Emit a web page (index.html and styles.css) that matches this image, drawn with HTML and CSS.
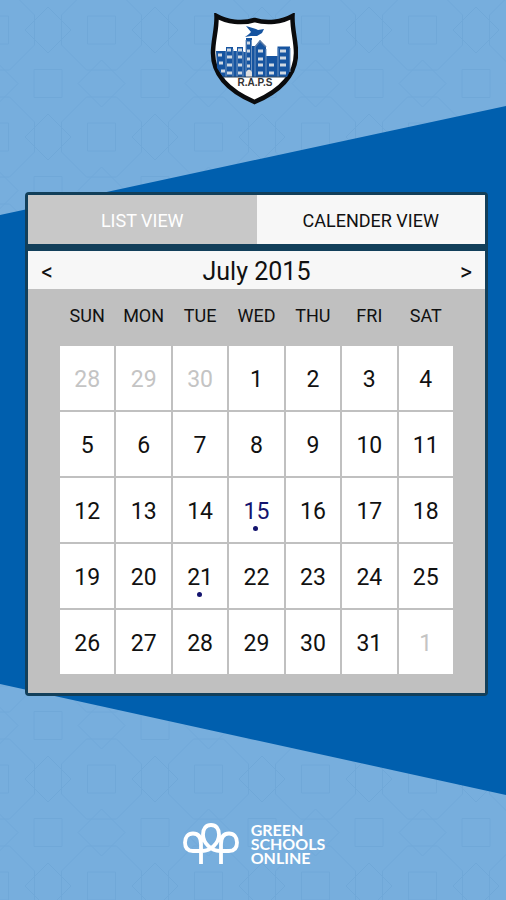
FILE: index.html
```html
<!DOCTYPE html>
<html lang="en">
<head>
<meta charset="utf-8">
<meta name="viewport" content="width=device-width, initial-scale=1">
<title>School calendar</title>
<link rel="stylesheet" href="styles.css">
</head>
<body>
<div class="app">
  <svg class="backdrop" viewBox="0 0 506 900" preserveAspectRatio="none" aria-hidden="true">
    <defs>
      <pattern id="tiles" width="107" height="107" patternUnits="userSpaceOnUse" x="48" y="30">
        <g fill="none" stroke="#5f9bcd" stroke-width="1">
          <!-- squares -->
          <path d="M39.500-14v28h28v-28M39.500 121v-28h28v28M-14 39.500h28v28h-28M121 39.500h-28v28h28"/>
          <!-- diamonds -->
          <path d="M0-23L23 0L0 23M107-23L84 0L107 23M0 84L23 107M107 84L84 107M53.500 30L77 53.500L53.500 77L30 53.500z"/>
          <!-- octagons -->
          <path d="M13.500 0V15L38.500 40H68.500L93.500 15V0M13.500 107V92L38.500 67H68.500L93.500 92V107"/>
        </g>
      </pattern>
    </defs>
    <rect width="506" height="900" fill="#77aedd"/>
    <rect width="506" height="900" fill="url(#tiles)" opacity=".3"/>
    <path d="M0 215L506 106V795L0 684z" fill="#005fae"/>
  </svg>

  <header class="crest">
    <svg viewBox="0 0 88 92" role="img" aria-label="R.A.P.S">
      <path d="M6.500 3C17 9 32 11 44.500 7C57 11 72 9 82.500 3C82 16 86 27 86 40C86 62 70 78 44.500 89C19 78 3 62 3 40C3 27 7 16 6.500 3z" fill="#fff" stroke="#0a0b0d" stroke-width="4.500"/>
      <path d="M6 38h10v-4h7v4h4v-4h6v5h3V25h6v8h3.500L50 27l6 7v9h11.500v-9.500H80V58l-3 6H13l-6-9z" fill="#1654a0"/>
      <path d="M36 13l10 3l2 1l6-1l-2 4l-5 3h-6l-6 1l4-3l2-2z" fill="#1654a0"/>
      <path d="M16 38v26M23 36v28M27 38v26M33 38v26M36 27v36M41.500 27v36M45 34v30M56 36v28M68 35v29M80 35v24" stroke="#6f93bf" fill="none"/>
      <path d="M45 34l5-6l6 6" fill="none" stroke="#5b7ba6" stroke-width="1.500"/>
      <path d="M8 42h4M9 50h4M11 58h4M17 37h4M17 44h5M17 52h5M17 60h5M28 37h4M28 44h4M28 52h4M28 60h4M37 30h3M37 38h3M37 46h3M37 53h3M48 38h5M48 46h5M48 52h5M48 60h5M59 52h5M59 60h5M70 38h6M70 45h6M70 52h6M70 60h6" stroke="#cfd8e2" stroke-width="3"/>
      <path d="M36 64v-5q3-5 6 0v5z" fill="#dedede"/>
      <path d="M13 64h63" stroke="#33495f"/>
      <text x="45" y="73" text-anchor="middle">R.A.P.S</text>
    </svg>
  </header>

  <main class="panel">
    <nav class="tabs" aria-label="View">
      <button class="tab" type="button">LIST VIEW</button>
      <button class="tab tab-active" type="button">CALENDER VIEW</button>
    </nav>
    <div class="month">
      <button class="step" type="button" aria-label="Previous month">&lt;</button>
      <h1>July 2015</h1>
      <button class="step" type="button" aria-label="Next month">&gt;</button>
    </div>
    <div class="sheet">
      <table class="calendar">
        <thead>
          <tr><th>SUN</th><th>MON</th><th>TUE</th><th>WED</th><th>THU</th><th>FRI</th><th>SAT</th></tr>
        </thead>
        <tbody>
          <tr><td class="other">28</td><td class="other">29</td><td class="other">30</td><td>1</td><td>2</td><td>3</td><td>4</td></tr>
          <tr><td>5</td><td>6</td><td>7</td><td>8</td><td>9</td><td>10</td><td>11</td></tr>
          <tr><td>12</td><td>13</td><td>14</td><td class="event today">15</td><td>16</td><td>17</td><td>18</td></tr>
          <tr><td>19</td><td>20</td><td class="event">21</td><td>22</td><td>23</td><td>24</td><td>25</td></tr>
          <tr><td>26</td><td>27</td><td>28</td><td>29</td><td>30</td><td>31</td><td class="other">1</td></tr>
        </tbody>
      </table>
    </div>
  </main>

  <footer class="brand">
    <svg viewBox="0 0 56 42" aria-hidden="true">
      <path d="M18 41V21C18 14 15 10.500 10 10.500C5 10.500 2 14 2 19.500C2 25 5 28 10 28H19C28 28 36 20 36 11.500C36 5.500 33 2 28 2C23 2 20 5.500 20 11.500C20 20 28 28 37 28H46C51 28 54 25 54 19.500C54 14 51 10.500 46 10.500C41 10.500 38 14 38 21V41" fill="none" stroke="#fff" stroke-width="3.800"/>
    </svg>
    <p>GREEN<br>SCHOOLS<br>ONLINE</p>
  </footer>
</div>
</body>
</html>
```

FILE: styles.css
```css
* {
  box-sizing: border-box;
}

body {
  margin: 0;
  font-family: Roboto, "Liberation Sans", sans-serif;
  color: #111;
}

.app {
  position: relative;
  z-index: 0;
  display: flex;
  flex-direction: column;
  min-height: 100vh;
  padding: 13px 18px 35px 25px;
}

.backdrop {
  position: absolute;
  z-index: -1;
  top: 0;
  left: 0;
  width: 100%;
  height: 100%;
}

.crest {
  display: flex;
  justify-content: center;
  margin-bottom: 87px;
  padding-right: 6px;
}

.crest svg {
  width: 88px;
  height: 92px;
}

.crest text {
  font: 700 10px "Liberation Sans", sans-serif;
  fill: #333;
}

.panel {
  border: 3px solid #123f5a;
  border-radius: 4px;
  background: #123f5a;
}

.tabs {
  display: flex;
  margin-bottom: 7px;
}

button {
  border: 0;
  padding: 0;
  background: none;
  font-family: inherit;
  color: inherit;
}

.tab {
  flex: 1;
  height: 49px;
  padding-top: 2px;
  background: #c8c8c8;
  color: #fff;
  font-size: 18px;
}

.tab-active {
  background: #f7f7f7;
  color: #111;
}

.month {
  display: flex;
  align-items: center;
  justify-content: space-between;
  height: 38px;
  padding: 0 9px;
  background: #f7f7f7;
}

.month h1 {
  margin: 0;
  padding-top: 4px;
  font-size: 25px;
  font-weight: 400;
  line-height: 34px;
}

.step {
  width: 20px;
  height: 38px;
  padding-top: 4px;
  font-size: 23px;
}

.sheet {
  padding: 0 30px 17px;
  background: #c0c0c0;
}

.calendar {
  width: 100%;
  table-layout: fixed;
  border-collapse: separate;
  border-spacing: 2px;
}

.calendar th {
  height: 53px;
  padding: 0 0 4px;
  font-size: 18px;
  font-weight: 400;
}

.calendar td {
  position: relative;
  height: 64px;
  padding: 2px 0 0;
  background: #fff;
  text-align: center;
  font-size: 23px;
}

.calendar .other {
  color: #c4c4c4;
}

.calendar .today {
  color: #14146e;
}

.event::after {
  content: "";
  position: absolute;
  left: 50%;
  bottom: 11px;
  width: 5px;
  height: 5px;
  margin-left: -3px;
  border-radius: 50%;
  background: #14146e;
}

.brand {
  display: flex;
  align-items: center;
  justify-content: center;
  gap: 12px;
  margin-top: auto;
  padding-right: 5px;
}

.brand svg {
  width: 56px;
  height: 42px;
}

.brand p {
  margin: 0;
  color: #fff;
  font: 700 16px/14px Lato, "Open Sans", sans-serif;
}
```
